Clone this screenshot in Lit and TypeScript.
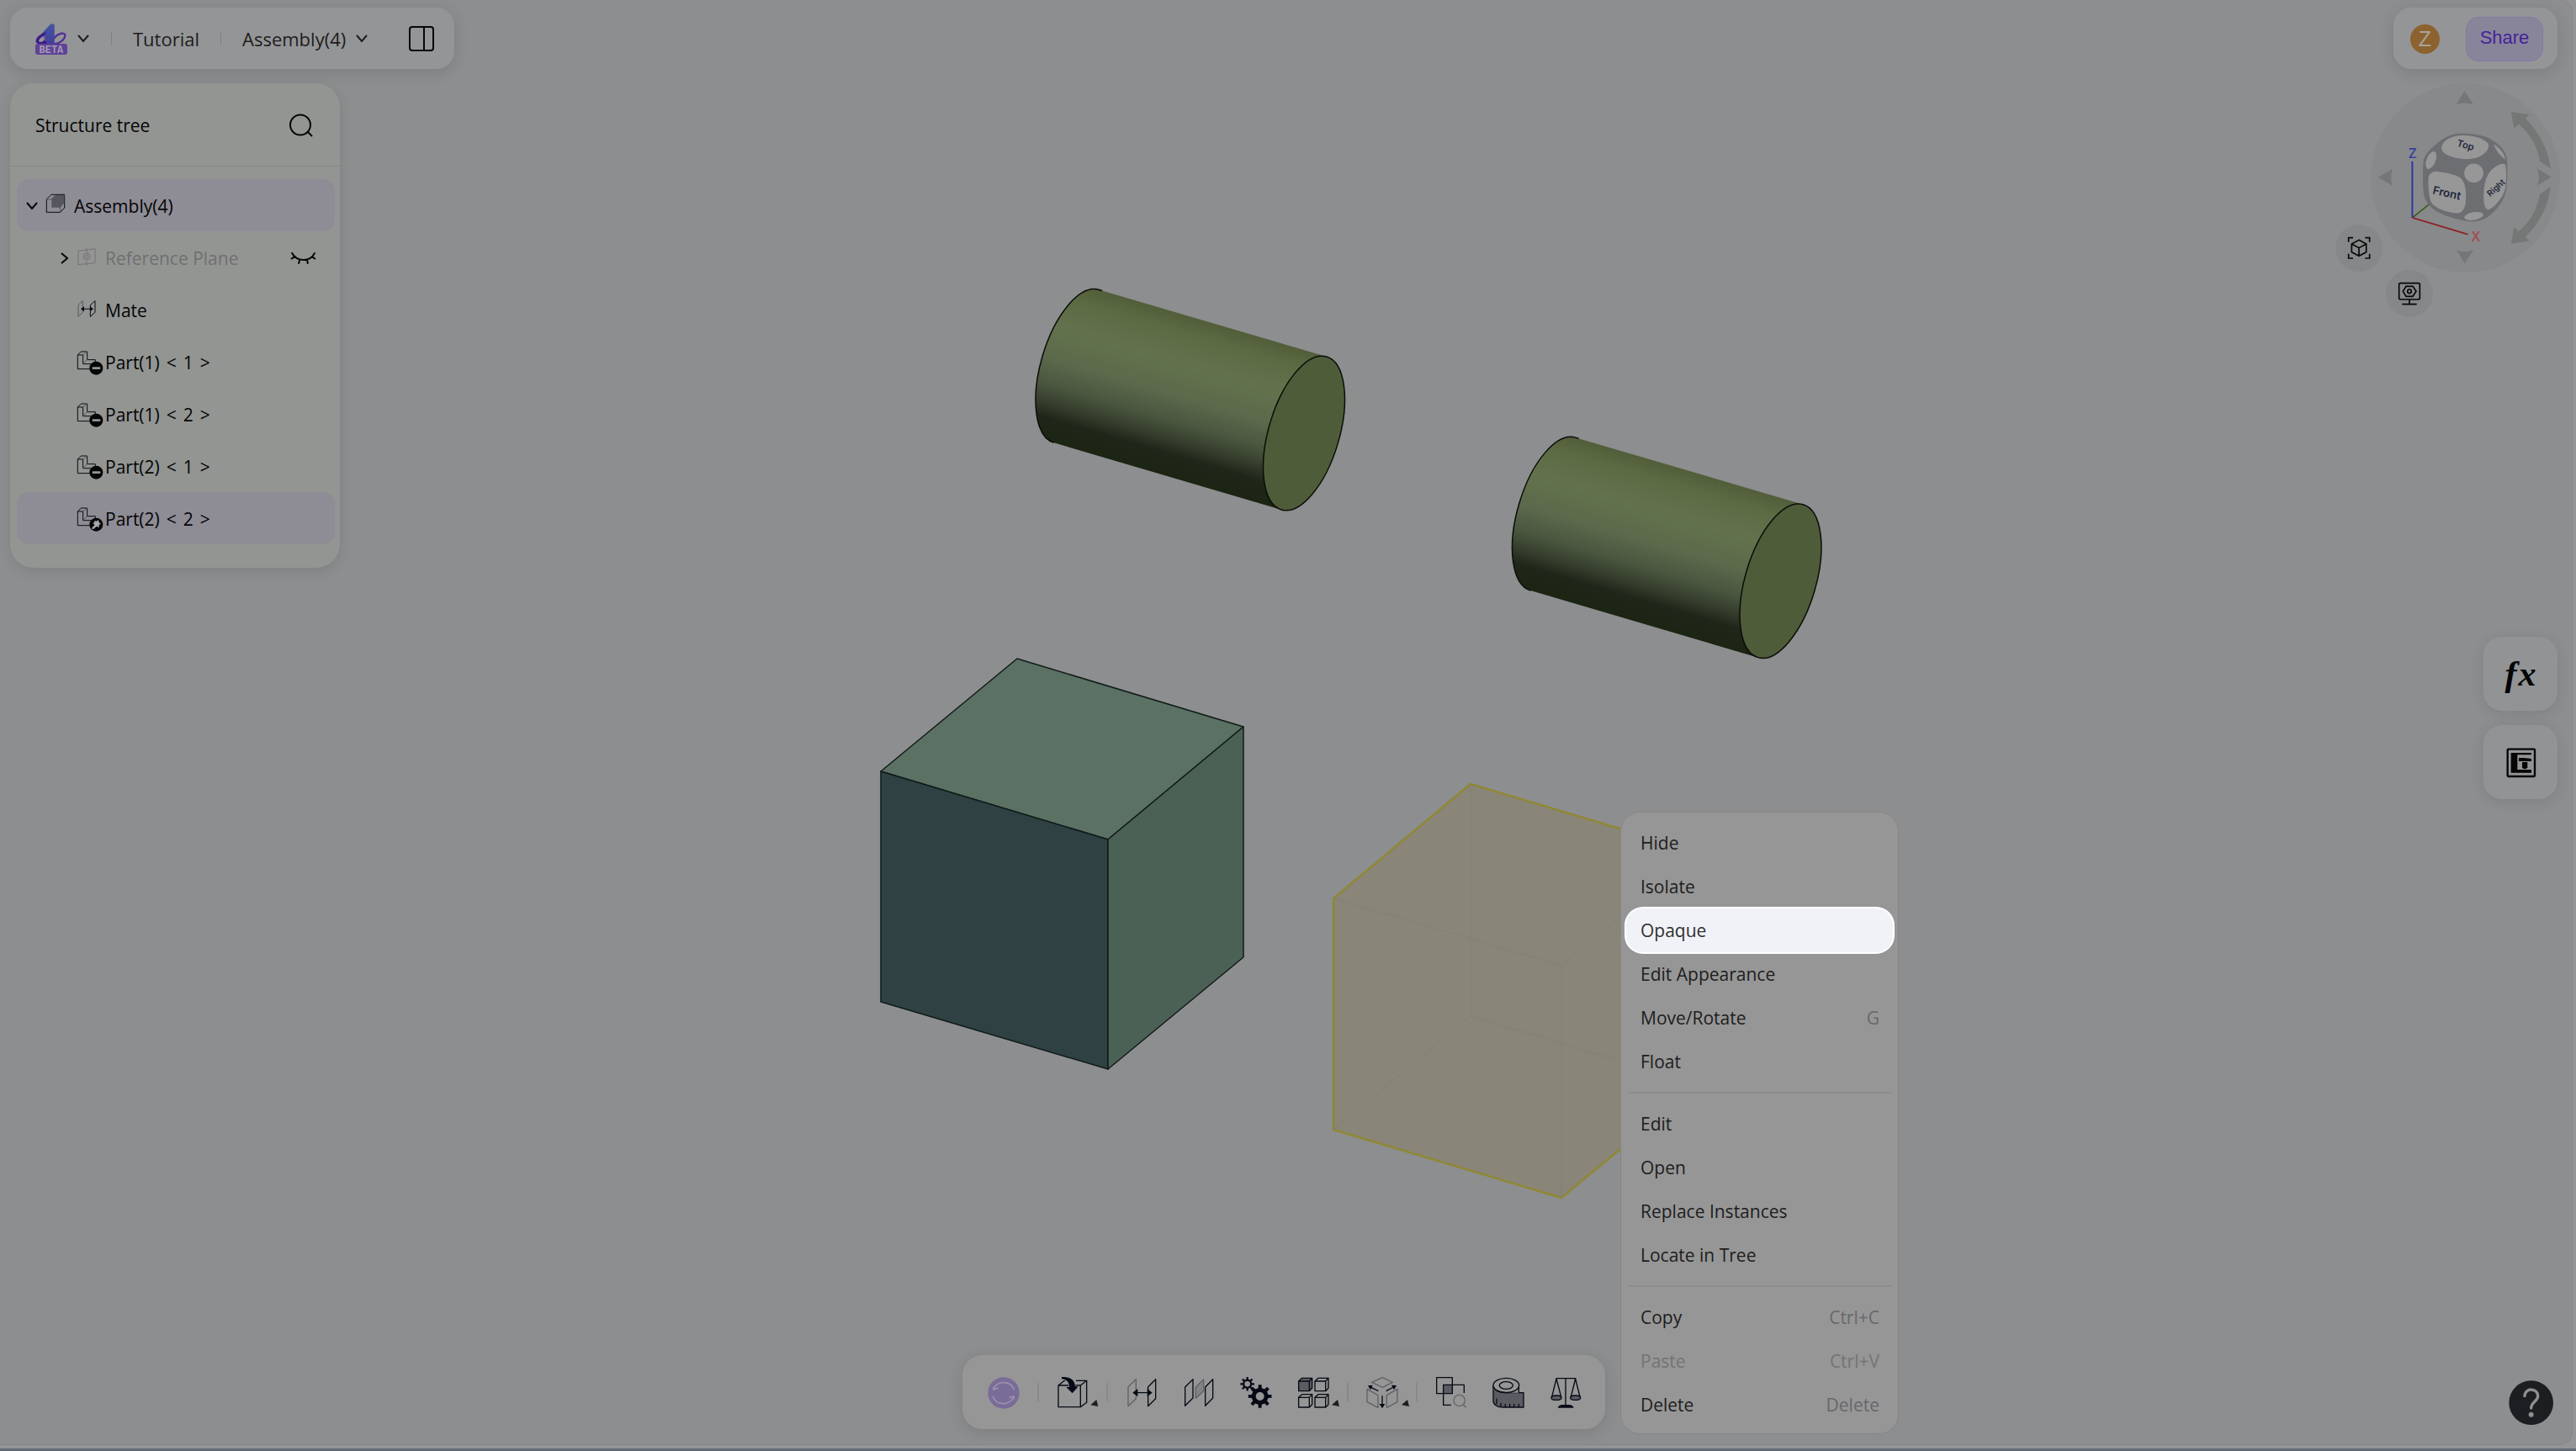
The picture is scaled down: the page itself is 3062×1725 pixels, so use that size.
import { LitElement, html, svg, css, nothing } from "lit";
import { customElement } from "lit/decorators.js";
import { classMap } from "lit/directives/class-map.js";

/** Builds the outline of a toothed gear with a round hole. */
function gear(cx: number, cy: number, root: number, tip: number, teeth: number, hole: number): string {
  const pts: string[] = [];
  const step = (Math.PI * 2) / teeth;
  for (let i = 0; i < teeth; i++) {
    const a = i * step - Math.PI / 2;
    const add = (r: number, t: number) =>
      pts.push(`${(cx + r * Math.cos(a + t)).toFixed(1)} ${(cy + r * Math.sin(a + t)).toFixed(1)}`);
    add(root, -step * 0.27);
    add(tip, -step * 0.17);
    add(tip, step * 0.17);
    add(root, step * 0.27);
  }
  return `M${pts.join("L")}Z M${cx - hole} ${cy} a${hole} ${hole} 0 1 0 ${hole * 2} 0 a${hole} ${hole} 0 1 0 ${-hole * 2} 0Z`;
}

const chevronDown = html`<svg class="chev" viewBox="0 0 16 10"><path d="M2 1 8 8 14 1" /></svg>`;

const caret = (x: number) => svg`<path class="caret" d="M${x} 241l21-19 6 24z" />`;

const patternCube = (x: number, y: number, filled: boolean) => svg`
  <g transform="translate(${x} ${y})">
    <path class=${filled ? "ink grey-fill" : "ink"} d="M41 156 53 145H89V181L79 191H41Z" />
    <path class="ink" d="M41 156H79V191M79 156 89 145" />
  </g>`;

const toolIcons = {
  refresh: svg`
    <circle cx="190" cy="198" r="56" fill="#796c99" />
    <g fill="none" stroke="#9a93aa" stroke-width="5">
      <path d="M154 184A40 40 0 0 1 228 187M151 209A40 40 0 0 0 225 213" />
      <path d="M153 176 154 186 171 180M227 220 226 210 209 215" />
    </g>`,
  insert: svg`
    <path class="ink" d="M389 171H468V248H389ZM468 248 490 232V154H452M468 171 490 154M389 171 412 153H424" />
    <path d="M401 141C430 140 447 150 449 175H460L439 199 417 177H428C428 160 420 150 401 148Z" fill="#050a14" stroke="#969696" stroke-width="4" paint-order="stroke" />
    ${caret(504)}`,
  mate: svg`
    <path class="ink soft" fill="#8c8c8d" d="M636 176 664 149V218L636 245Z" />
    <path class="ink" d="M707 176 734 149V218L707 245ZM662 197H714" />
    <path class="solid" d="M652 197 670 183V211ZM722 197 704 183V211Z" />`,
  planes: svg`
    <path class="ink" d="M839 177 867 149V216L839 244ZM911 177 938 149V216L911 244Z" />
    <path class="ink faint" d="M877 177 905 150V191L877 217Z" />`,
  gears: svg`
    <path class="solid" fill-rule="evenodd" d=${gear(1104, 210, 30, 42, 8, 15)} />
    <path class="solid" fill-rule="evenodd" d=${gear(1059, 166, 17, 25, 8, 10)} />`,
  pattern: svg`
    ${patternCube(0, 0, true)}${patternCube(58, 0, false)}${patternCube(0, 58, false)}${patternCube(58, 58, false)}
    ${caret(159)}`,
  explode: svg`
    <path class="ink soft" d="M303 160 341 143 377 160 341 178ZM286 184 325 206V250L286 230ZM394 184 356 206V250L394 230Z" />
    <path class="ink" d="M326 191 300 178M354 191 380 177M340 208V240" />
    <path class="solid" d="M289 172 306 170 298 187ZM391 171 373 170 382 187ZM330 237H350L340 253Z" />
    ${caret(409)}`,
  intersect: svg`
    <path fill="#5a5c61" d="M561 170H592V200H561Z" />
    <path class="ink" d="M536 143H592V200H536ZM560 241V169H634V198M558 241H588" />
    <g class="ink faint-line"><circle cx="617" cy="225" r="20" /><path d="M631 240 641 250" /></g>`,
  measure: svg`
    <path class="ink grey-fill" d="M736 172V230C741 246 756 249 772 249H844V197H796C766 197 742 192 736 176" />
    <path fill="#969696" d="M736 171V184Q750 197 782 197H827V171Z" />
    <path class="ink" d="M827 175V197M736 176Q742 197 790 197" />
    <ellipse class="ink" fill="#969696" cx="782" cy="171" rx="46" ry="26" />
    <ellipse class="ink" cx="782" cy="171" rx="24" ry="13" />
    <path class="ink" d="M748 218V238M763 234V246M779 237V248M795 237V248M810 237V248M827 237V248" />`,
  balance: svg`
    <path class="ink" d="M958 146H1030M993 146V244M960 147 944 212M960 147 977 212M1028 147 1012 212M1028 147 1044 212" />
    <ellipse class="ink grey-fill" cx="960" cy="215" rx="18" ry="8" />
    <ellipse class="ink grey-fill" cx="1028" cy="215" rx="18" ry="8" />
    <path class="solid" d="M965 251Q968 240 982 240H1004Q1019 240 1022 251Z" />`,
};

type Tool = { id: keyof typeof toolIcons; label: string; x: number } | "divider";

const tools: Tool[] = [
  { id: "refresh", label: "Update", x: 88 },
  "divider",
  { id: "insert", label: "Insert", x: 338 },
  "divider",
  { id: "mate", label: "Mate", x: 582 },
  { id: "planes", label: "Group mate", x: 786 },
  { id: "gears", label: "Gear relation", x: 988 },
  { id: "pattern", label: "Pattern", x: -9 },
  "divider",
  { id: "explode", label: "Exploded view", x: 238 },
  "divider",
  { id: "intersect", label: "Interference check", x: 486 },
  { id: "measure", label: "Measure", x: 688 },
  { id: "balance", label: "Mass properties", x: 891 },
];

const partBase = svg`
  <path class="thin" d="M278 701V751H330M278 701 290 689H312V718H341V740M278 701H297V733H326" />
  <path class="thin soft" d="M297 701 312 689M297 733 312 718" />
  <circle cx="344" cy="748" r="24" fill="#050505" />`;

const treeIcons = {
  assembly: html`<svg class="t-icon" viewBox="159 126 96 90">
    <path class="thin" d="M163 147 180 130H227V177L212 193H163Z" />
    <path fill="#55575c" d="M181 146 196 132H226V160L212 176H181Z" />
    <path class="thin soft" d="M163 147H181L194 131M212 193V146L227 131M212 146H181" />
  </svg>`,
  plane: html`<svg class="t-icon" viewBox="274 309 96 90">
    <g fill="none" stroke="#747474" stroke-width="3">
      <path d="M280 328 340 320V371L280 377ZM310 316V334M310 363V381" />
      <circle cx="310" cy="348" r="12" /><circle cx="310" cy="348" r="6" />
    </g>
  </svg>`,
  mate: html`<svg class="t-icon" viewBox="274 495 96 90">
    <path class="thin soft" d="M280 521 296 506V547L280 562Z" />
    <path class="thin" d="M323 521 340 506V547L323 562ZM296 535H326" />
    <path fill="#0a0a12" d="M289 535 301 526V544ZM334 535 322 526V544Z" />
  </svg>`,
  part: html`<svg class="t-icon" viewBox="274 680 96 96">
    ${partBase}<rect x="330" y="744" width="29" height="8" rx="2" fill="#939593" />
  </svg>`,
  pinned: html`<svg class="t-icon" viewBox="274 680 96 96">
    ${partBase}
    <path fill="#a9a7b0" d="M337 734 345 736 352 731 354 740 361 745 354 749 354 759 346 754 333 765 328 761 339 749 331 742 338 741Z" />
  </svg>`,
};

interface Node {
  label: string;
  icon: keyof typeof treeIcons;
  instance?: string;
  root?: boolean;
  selected?: boolean;
  muted?: boolean;
}

const nodes: Node[] = [
  { label: "Assembly(4)", icon: "assembly", root: true, selected: true },
  { label: "Reference Plane", icon: "plane", muted: true },
  { label: "Mate", icon: "mate" },
  { label: "Part(1)", instance: "1", icon: "part" },
  { label: "Part(1)", instance: "2", icon: "part" },
  { label: "Part(2)", instance: "1", icon: "part" },
  { label: "Part(2)", instance: "2", icon: "pinned", selected: true },
];

interface MenuItem {
  label: string;
  key?: string;
  active?: boolean;
  disabled?: boolean;
}

const menu: MenuItem[][] = [
  [
    { label: "Hide" },
    { label: "Isolate" },
    { label: "Opaque", active: true },
    { label: "Edit Appearance" },
    { label: "Move/Rotate", key: "G" },
    { label: "Float" },
  ],
  [{ label: "Edit" }, { label: "Open" }, { label: "Replace Instances" }, { label: "Locate in Tree" }],
  [
    { label: "Copy", key: "Ctrl+C" },
    { label: "Paste", key: "Ctrl+V", disabled: true },
    { label: "Delete", key: "Delete" },
  ],
];

const cylinder = (x: number, y: number) => svg`
  <g transform="translate(${x} ${y}) rotate(16.4)">
    <path fill="url(#barrel)" d="M0 -94.8H-282A42.1 94.8 0 0 0 -282 94.8H0Z" />
    <path fill="none" stroke="#0b0d08" stroke-width="1.5" d="M-278 -94.8H-282A42.1 94.8 0 0 0 -282 94.8" />
    <ellipse rx="42.1" ry="94.8" fill="#4f5c39" stroke="#0b0d08" stroke-width="1.5" />
  </g>`;

@customElement("model-scene")
export class ModelScene extends LitElement {
  static styles = css`
    :host { display: block; }
    svg { display: block; width: 100%; height: 100%; }
  `;
  render() {
    return html`<svg viewBox="0 0 3062 1725" preserveAspectRatio="xMidYMid slice" aria-hidden="true">
      <defs>
        <linearGradient id="barrel" gradientUnits="userSpaceOnUse" x1="0" y1="-95" x2="0" y2="95">
          <stop offset="0" stop-color="#515e39" />
          <stop offset="0.12" stop-color="#5d6b44" />
          <stop offset="0.3" stop-color="#63724d" />
          <stop offset="0.5" stop-color="#5c694b" />
          <stop offset="0.66" stop-color="#4a563f" />
          <stop offset="0.78" stop-color="#333b2a" />
          <stop offset="0.86" stop-color="#1f271a" />
          <stop offset="1" stop-color="#1c2413" />
        </linearGradient>
      </defs>
      ${cylinder(1550, 515)} ${cylinder(2116.5, 690.7)}
      <g stroke="#111a18" stroke-width="1.5" stroke-linejoin="round">
        <path fill="#5a7164" d="M1209 783 1478 864 1317 998 1047 917Z" />
        <path fill="#2f4142" d="M1047 917 1317 998V1271L1047 1191Z" />
        <path fill="#4c6155" d="M1317 998 1478 864V1138L1317 1271Z" />
      </g>
      <path fill="#898578" stroke="#8f8834" stroke-width="2.5" d="M1748 932 2019 1013V1289L1856 1424 1585 1343V1068Z" />
      <path fill="none" stroke="#848074" stroke-width="1" d="M1585 1068 1856 1148 2019 1013M1856 1148V1424M1748 932V1208L1585 1343M1748 1208 2019 1289" />
    </svg>`;
  }
}

@customElement("view-gizmo")
export class ViewGizmo extends LitElement {
  static styles = css`
    :host { display: block; position: relative; width: 267px; height: 279px; }
    .dial { display: block; margin-left: auto; width: 225px; height: 225px; }
    .mark { font-family: Inter, "Liberation Sans", sans-serif; font-weight: 600; fill: #22273c; }
    .axis { font-family: "Open Sans", sans-serif; font-weight: 600; font-size: 50px; }
    .orb {
      position: absolute; display: grid; place-items: center; width: 56px; height: 56px; padding: 0;
      border: 0; border-radius: 50%; background: #868789;
    }
    .orb svg { width: 28px; height: 28px; fill: none; stroke: #060606; stroke-width: 5; }
    .fit { left: 0; top: 168px; }
    .display { left: 60px; top: 222px; }
  `;
  render() {
    return html`
      <svg class="dial" viewBox="23 29 674 674">
        <circle cx="360" cy="366" r="337" fill="#88898b" />
        <g fill="#757676">
          <path d="M357 57 388 105Q357 94 327 105Z" />
          <path d="M50 364 101 334Q90 363 100 394Z" />
          <path d="M666 363 615 332Q628 363 615 394Z" />
          <path d="M358 671 328 622Q358 635 389 622Z" />
          <path d="M523 131 588 140 574 155C620 200 655 260 663 332L625 307C617 255 592 210 550 175L533 190Z" />
          <path d="M523 600 588 591 574 576C620 531 655 471 663 399L625 424C617 476 592 521 550 556L533 541Z" />
        </g>
        <path stroke="#336018" stroke-width="5" d="M172 507 242 451" />
        <path fill="#6d6e72" d="M345 207C385 208 425 214 445 225C475 242 500 262 507 292C511 320 510 380 505 412C498 450 465 490 435 508C415 519 395 523 370 521C330 514 280 500 255 483C235 472 218 450 213 430C207 400 208 340 211 305C216 280 240 258 265 238C290 218 315 207 345 207Z" />
        <g fill="#979798">
          <path d="M275 258C278 235 305 216 350 214C400 216 438 230 443 250C443 275 410 299 365 299C318 298 274 282 275 258Z" />
          <path d="M228 372C228 350 245 340 265 344C300 348 330 355 345 368C360 385 363 410 362 440C361 480 345 495 325 491C290 487 255 475 240 455C230 440 228 400 228 372Z" />
          <path d="M425 430C425 400 430 362 450 341C470 320 495 309 502 320C507 340 506 380 501 408C490 443 460 474 442 479C428 480 425 455 425 430Z" />
          <circle cx="390" cy="349" r="34" />
          <ellipse cx="238" cy="303" rx="16" ry="33" transform="rotate(22 238 303)" />
          <ellipse cx="390" cy="502" rx="34" ry="14" transform="rotate(-10 390 502)" />
          <path d="M461 246C480 256 500 280 502 301C485 288 466 266 461 246Z" />
        </g>
        <text class="mark" font-size="40" transform="translate(242 422) rotate(13)">Front</text>
        <text class="mark" font-size="34" transform="translate(328 252) rotate(16)">Top</text>
        <text class="mark" font-size="30" transform="translate(448 434) rotate(-42)">Right</text>
        <path stroke="#3434a0" stroke-width="6" d="M171 508V307" />
        <path stroke="#8f2227" stroke-width="5" d="M172 508 369 567" />
        <text class="axis" x="158" y="297" fill="#34449c">Z</text>
        <text class="axis" x="382" y="593" fill="#a24d4d">X</text>
      </svg>
      <button class="orb fit" aria-label="Fit to view">
        <svg viewBox="149 843 84 84">
          <path d="M154 863V848H170M213 848H229V863M229 905V921H213M170 921H154V905" />
          <path d="M191 856 217 870V899L191 913 165 899V870ZM166 871 191 884 216 871M191 884V912" />
        </svg>
      </button>
      <button class="orb display" aria-label="Display settings">
        <svg viewBox="330 1004 84 84">
          <rect x="335" y="1009" width="74" height="58" rx="5" />
          <path d="M349 1038 360 1020H384L396 1038 384 1056H360ZM372 1067V1083M346 1084H398" />
          <circle cx="372" cy="1038" r="7" />
        </svg>
      </button>`;
  }
}

@customElement("structure-tree")
export class StructureTree extends LitElement {
  static styles = css`
    :host {
      display: block; width: 392px; border-radius: 28px; background: #939593; padding-bottom: 28px;
      box-shadow: 0 4px 16px rgba(0, 0, 0, 0.1); color: #050505;
    }
    .head {
      box-sizing: border-box; display: flex; align-items: center; justify-content: space-between; height: 99px;
      padding: 2px 32px 0 30px; border-bottom: 1px solid #868886;
    }
    .title { margin: 0; font-size: 21px; font-weight: 400; line-height: 28px; }
    button { padding: 0; border: 0; background: none; color: inherit; font: inherit; }
    .find svg { display: block; width: 28px; height: 28px; fill: none; stroke: #050505; stroke-width: 2; }
    ul { list-style: none; margin: 0; padding: 15px 6px 0 8px; }
    .row {
      box-sizing: border-box; display: flex; align-items: center; height: 62px; padding: 2px 21px 0 47px;
      border-radius: 14px;
    }
    .root { padding-left: 10px; }
    .selected { background: #8e8c95; }
    .twist { display: grid; place-items: center start; width: 24px; height: 24px; flex: none; }
    .twist svg { fill: none; stroke: #050505; stroke-width: 2; }
    .twist .chev { width: 16px; height: 10px; }
    .twist .side { width: 10px; height: 16px; margin-left: 5px; }
    .t-icon { width: 32px; height: 32px; flex: none; }
    .label {
      flex: 1; display: flex; gap: 8px; margin-left: 2px; font-size: 21px; line-height: 28px; text-align: left;
    }
    .muted .label { color: #6f706f; }
    .thin { fill: none; stroke: #0a0a12; stroke-width: 3; }
    .soft { stroke: #55565c; }
    .eye { width: 33px; height: 18px; fill: none; stroke: #050505; stroke-width: 6; display: block; }
  `;
  render() {
    return html`
      <div class="head">
        <h2 class="title">Structure tree</h2>
        <button class="find" aria-label="Search">
          <svg viewBox="0 0 28 28"><circle cx="13" cy="13.5" r="12" /><path d="M22 22 27 27" /></svg>
        </button>
      </div>
      <ul>
        ${nodes.map(
          (n) => html`<li class=${classMap({ row: true, root: !!n.root, selected: !!n.selected, muted: !!n.muted })}>
            ${n.root
              ? html`<button class="twist" aria-label="Collapse">${chevronDown}</button>`
              : n.muted
                ? html`<button class="twist" aria-label="Expand"><svg class="side" viewBox="0 0 10 16"><path d="M1 2 8 8 1 14" /></svg></button>`
                : html`<span class="twist"></span>`}
            ${treeIcons[n.icon]}
            <button class="label">
              <span>${n.label}</span>
              ${n.instance ? html`<span>&lt;</span> <span>${n.instance}</span> <span>&gt;</span>` : nothing}
            </button>
            ${n.muted
              ? html`<button aria-label="Show"><svg class="eye" viewBox="1032 330 99 54">
                  <path d="M1040 337Q1054 363 1082 363T1123 337M1051 351 1038 360M1069 360 1065 377M1094 360 1098 377M1112 351 1125 360" />
                </svg></button>`
              : nothing}
          </li>`
        )}
      </ul>`;
  }
}

@customElement("context-menu")
export class ContextMenu extends LitElement {
  static styles = css`
    :host {
      display: block; box-sizing: border-box; width: 331px; padding: 10px 6px 8px;
      border: 1px solid #858587; border-radius: 23px; background: #969696;
    }
    .group + .group { border-top: 2px solid #8c8c8c; padding-top: 10px; margin: 10px 2px 0; }
    .item {
      display: flex; align-items: center; justify-content: space-between; width: 100%; height: 52px;
      padding: 0 14px 0 15px; border: 0; border-radius: 20px; background: none;
      color: #1d1d1d; font: inherit; font-size: 21px; line-height: 30px; white-space: nowrap;
    }
    .group:first-child .item { padding: 0 16px 0 17px; }
    .key { color: #67676e; }
    .item:disabled, .item:disabled .key { color: #747474; }
    .item.active { background: #f1f2f7; color: #303030; box-shadow: 0 0 0 2px #ffffff; }
  `;
  render() {
    return html`<div role="menu">
      ${menu.map(
        (g) => html`<div class="group" role="group">
          ${g.map(
            (i) => html`<button role="menuitem" class=${classMap({ item: true, active: !!i.active })} ?disabled=${!!i.disabled}>
              <span>${i.label}</span>${i.key ? html`<span class="key">${i.key}</span>` : nothing}
            </button>`
          )}
        </div>`
      )}
    </div>`;
  }
}

@customElement("tool-dock")
export class ToolDock extends LitElement {
  static styles = css`
    :host {
      display: flex; align-items: center; height: 88px; padding: 0 13px 0 15px;
      border-radius: 24px; background: #969696; box-shadow: 0 4px 18px rgba(0, 0, 0, 0.12);
    }
    button { display: block; width: 68px; height: 60px; padding: 0; border: 0; background: none; }
    svg { display: block; width: 68px; height: 38px; margin-top: 1px; }
    .rule { width: 2px; height: 22px; margin: 0 6px; background: #88898b; }
    .ink { fill: none; stroke: #050a14; stroke-width: 4; stroke-linejoin: round; }
    .soft { stroke: #5f6166; }
    .faint { stroke: #5f6166; fill: #828383; }
    .faint-line { stroke: #63656a; }
    .grey-fill { fill: #5a5c61; }
    .solid { fill: #050a14; }
    .caret { fill: #1e1e20; }
  `;
  render() {
    return html`${tools.map((t) =>
      t === "divider"
        ? html`<span class="rule"></span>`
        : html`<button aria-label=${t.label}>
            <svg viewBox="${t.x} 141 204 114">${toolIcons[t.id]}</svg>
          </button>`
    )}`;
  }
}

@customElement("app-root")
export class AppRoot extends LitElement {
  static styles = css`
    :host {
      display: block; font-family: "Open Sans", "Noto Sans", sans-serif; font-size: 21px; color: #1d1d1d;
    }
    .shell { display: flex; flex-direction: column; height: 100vh; background: #949496; overflow: hidden; }
    .frame {
      position: relative; flex: 1; display: flex; flex-direction: column; margin-right: 4px;
      border: 1px solid #858688; border-width: 0 1px 1px 0; border-radius: 0 14px 16px 0;
      background: #8d8e90; overflow: hidden;
    }
    .edge { height: 3px; margin-top: 4px; background: #636973; flex: none; }
    model-scene { position: absolute; left: 0; top: 0; width: 100vw; height: 100vh; }
    .top, .middle, .bottom { position: relative; }
    .top { display: flex; justify-content: space-between; padding: 9px 17px 17px 12px; }
    .middle { flex: 1; display: flex; justify-content: space-between; align-items: flex-start; padding-left: 12px; }
    .bottom {
      display: grid; grid-template-columns: 1fr auto 1fr; align-items: center;
      padding: 0 22px 18px 17px;
    }
    .bottom tool-dock { grid-column: 2; }
    .bar {
      box-sizing: border-box; display: flex; align-items: center; height: 73px; border-radius: 21px;
      background: #949597; box-shadow: 0 4px 18px rgba(0, 0, 0, 0.12); font-size: 22px; line-height: 28px;
    }
    .crumbs { width: 528px; padding: 1px 24px 0 30px; }
    .account { width: 195px; padding: 1px 17px 0 20px; justify-content: space-between; }
    button { padding: 0; border: 0; background: none; color: inherit; font: inherit; }
    a { color: inherit; text-decoration: none; }
    .brand, .doc { display: flex; align-items: center; gap: 11px; }
    .doc { margin-right: auto; }
    .logo { width: 38px; height: 37px; }
    .beta { font-family: "Liberation Mono", monospace; font-weight: 700; font-size: 12px; fill: #a29bb0; }
    .chev { width: 16px; height: 10px; fill: none; stroke: #1d1d1d; stroke-width: 2; }
    .rule { width: 1px; height: 16px; margin: 0 25px; background: #7f8082; }
    .pane { width: 30px; height: 30px; display: block; fill: none; stroke: #060606; stroke-width: 2; }
    .avatar {
      display: grid; place-items: center; width: 35px; height: 35px; border-radius: 50%; background: #8c622e;
      color: #a8a39c; font-family: "Liberation Sans", Arial, sans-serif; font-size: 25px; line-height: 35px;
    }
    .share {
      box-sizing: border-box; width: 92px; height: 53px; padding-bottom: 2px; border: 1px solid #8478a3; border-radius: 15px;
      background: #88859a; color: #46239a; font-family: "Liberation Sans", Arial, sans-serif; font-size: 22px;
    }
    .rail { display: flex; flex-direction: column; align-items: flex-end; padding-right: 14px; }
    .stack { display: flex; flex-direction: column; gap: 17px; margin: 379px 3px 0 0; }
    .tile {
      display: grid; place-items: center; width: 88px; height: 88px; border-radius: 22px; background: #929395;
      box-shadow: 0 3px 16px rgba(0, 0, 0, 0.1); color: #050505;
    }
    .fx {
      display: flex; gap: 2px; font-family: "Liberation Serif", serif; font-style: italic; font-weight: 700;
      font-size: 42px; line-height: 48px;
    }
    .tile svg { width: 36px; height: 36px; margin: 1px 0 0 1px; }
    .help { justify-self: end; width: 53px; height: 53px; margin-top: 24px; }
    .help svg { display: block; width: 53px; height: 53px; }
    context-menu { position: absolute; left: 1926px; top: 965px; }
  `;
  render() {
    return html`<div class="shell">
      <main class="frame">
        <model-scene></model-scene>
        <header class="top">
          <nav class="bar crumbs">
            <button class="brand" aria-label="Main menu">
              <svg class="logo" viewBox="0 0 38 37">
                <defs>
                  <linearGradient id="stem" x1="0" y1="0" x2="0" y2="1"><stop stop-color="#46559f" /><stop offset="1" stop-color="#413f9c" /></linearGradient>
                </defs>
                <ellipse cx="28" cy="17.8" rx="8.6" ry="4.4" transform="rotate(-36 28 17.800)" fill="none" stroke="#52309a" stroke-width="2.4" />
                <path fill="url(#stem)" d="M17.500 1.200Q22.800-1.500 22.800 3V25H12V13L1 19Z" />
                <path fill="#3c1d86" fill-rule="evenodd" d="M13 10Q1 14 0.500 21Q1 26 13 24V21L11.500 20.500V13.500ZM10.500 14.500V20Q7 22.800 4.200 21.500Q3.500 18 10.500 14.500Z" />
                <rect y="24" width="38" height="13" rx="3" fill="#5f4297" />
                <text class="beta" x="4.500" y="34.500">BETA</text>
              </svg>
              ${chevronDown}
            </button>
            <span class="rule"></span>
            <a href="#tutorial">Tutorial</a>
            <span class="rule"></span>
            <button class="doc">Assembly(4) ${chevronDown}</button>
            <button aria-label="Toggle panel">
              <svg class="pane" viewBox="0 0 30 30"><rect x="1" y="1" width="28" height="28" rx="3" /><path d="M18 1V29" /></svg>
            </button>
          </nav>
          <div class="bar account">
            <span class="avatar">Z</span>
            <button class="share">Share</button>
          </div>
        </header>
        <div class="middle">
          <structure-tree></structure-tree>
          <div class="rail">
            <view-gizmo></view-gizmo>
            <div class="stack">
              <button class="tile" aria-label="Variables"><span class="fx"><i>f</i><i>x</i></span></button>
              <button class="tile" aria-label="Bill of materials">
                <svg viewBox="237 448 108 108">
                  <rect x="242" y="453" width="97" height="97" rx="3" fill="none" stroke="#050505" stroke-width="7" />
                  <path fill="#050505" d="M254 466H327V473H277V526H327V537H254ZM282 484H300L327 487V496H282ZM294 499H313V519L308 523H299L294 519Z" />
                </svg>
              </button>
            </div>
          </div>
        </div>
        <footer class="bottom">
          <tool-dock></tool-dock>
          <button class="help" aria-label="Help">
            <svg viewBox="125 77 159 159">
              <circle cx="205" cy="157" r="79" fill="#1d1e22" />
              <path fill="none" stroke="#8f8f90" stroke-width="10" stroke-linecap="round" d="M182 133C182 102 229 103 229 133C229 152 205 154 205 176" />
              <circle cx="205" cy="199" r="9" fill="#8f8f90" />
            </svg>
          </button>
        </footer>
        <context-menu></context-menu>
      </main>
      <div class="edge"></div>
    </div>`;
  }
}
